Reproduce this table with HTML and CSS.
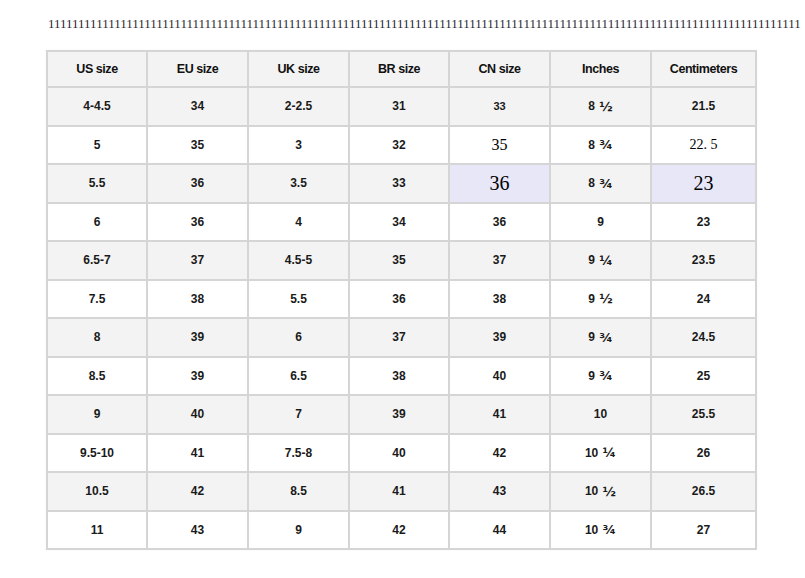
FILE: index.html
```html
<!DOCTYPE html>
<html>
<head>
<meta charset="utf-8">
<link rel="stylesheet" href="styles.css">
</head>
<body>
<div class="page">
  <p class="ones">11111111111111111111111111111111111111111111111111111111111111111111111111111111111111111111111111111111111111111111111111111</p>
  <div class="chart">
    <div class="row head">
      <div class="c">US size</div><div class="c">EU size</div><div class="c">UK size</div><div class="c">BR size</div><div class="c">CN size</div><div class="c">Inches</div><div class="c">Centimeters</div>
    </div>
    <div class="row alt">
      <div class="c">4-4.5</div><div class="c">34</div><div class="c">2-2.5</div><div class="c">31</div><div class="c small">33</div><div class="c">8&nbsp;<span class="frac">½</span></div><div class="c">21.5</div>
    </div>
    <div class="row">
      <div class="c">5</div><div class="c">35</div><div class="c">3</div><div class="c">32</div><div class="c serif m">35</div><div class="c">8&nbsp;<span class="frac">¾</span></div><div class="c serif s">22. 5</div>
    </div>
    <div class="row alt">
      <div class="c">5.5</div><div class="c">36</div><div class="c">3.5</div><div class="c">33</div><div class="c serif l hl">36</div><div class="c">8&nbsp;<span class="frac">¾</span></div><div class="c serif l hl">23</div>
    </div>
    <div class="row">
      <div class="c">6</div><div class="c">36</div><div class="c">4</div><div class="c">34</div><div class="c">36</div><div class="c">9</div><div class="c">23</div>
    </div>
    <div class="row alt">
      <div class="c">6.5-7</div><div class="c">37</div><div class="c">4.5-5</div><div class="c">35</div><div class="c">37</div><div class="c">9&nbsp;<span class="frac">¼</span></div><div class="c">23.5</div>
    </div>
    <div class="row">
      <div class="c">7.5</div><div class="c">38</div><div class="c">5.5</div><div class="c">36</div><div class="c">38</div><div class="c">9&nbsp;<span class="frac">½</span></div><div class="c">24</div>
    </div>
    <div class="row alt">
      <div class="c">8</div><div class="c">39</div><div class="c">6</div><div class="c">37</div><div class="c">39</div><div class="c">9&nbsp;<span class="frac">¾</span></div><div class="c">24.5</div>
    </div>
    <div class="row">
      <div class="c">8.5</div><div class="c">39</div><div class="c">6.5</div><div class="c">38</div><div class="c">40</div><div class="c">9&nbsp;<span class="frac">¾</span></div><div class="c">25</div>
    </div>
    <div class="row alt">
      <div class="c">9</div><div class="c">40</div><div class="c">7</div><div class="c">39</div><div class="c">41</div><div class="c">10</div><div class="c">25.5</div>
    </div>
    <div class="row">
      <div class="c">9.5-10</div><div class="c">41</div><div class="c">7.5-8</div><div class="c">40</div><div class="c">42</div><div class="c">10&nbsp;<span class="frac">¼</span></div><div class="c">26</div>
    </div>
    <div class="row alt">
      <div class="c">10.5</div><div class="c">42</div><div class="c">8.5</div><div class="c">41</div><div class="c">43</div><div class="c">10&nbsp;<span class="frac">½</span></div><div class="c">26.5</div>
    </div>
    <div class="row">
      <div class="c">11</div><div class="c">43</div><div class="c">9</div><div class="c">42</div><div class="c">44</div><div class="c">10&nbsp;<span class="frac">¾</span></div><div class="c">27</div>
    </div>
  </div>
</div>
</body>
</html>
```
FILE: styles.css
```css
html, body {
  margin: 0;
  padding: 0;
  background: #ffffff;
}
body {
  overflow: hidden;
  width: 805px;
  height: 578px;
}
.page {
  padding: 16px 0 0 0;
}
.ones {
  margin: 0 0 0 48px;
  font-family: "Liberation Serif", serif;
  font-size: 13px;
  line-height: 15px;
  color: #2a1f33;
  white-space: nowrap;
}
.chart {
  margin: 19px 0 0 46px;
  display: grid;
  grid-template-columns: 98px 99px 99px 98px 99px 99px 103px;
  grid-template-rows: 34px repeat(12, 36.5px);
  gap: 2px;
  padding: 2px;
  width: max-content;
  background: #d5d5d5;
  box-shadow: 0 0 1px rgba(0,0,0,0.08);
}
.row {
  display: contents;
}
.c {
  display: flex;
  align-items: center;
  justify-content: center;
  background: #ffffff;
  font-family: "Liberation Sans", Arial, sans-serif;
  font-weight: bold;
  font-size: 12px;
  color: #1a1a1a;
}
.row.alt .c,
.row.head .c {
  background: #f3f3f3;
}
.row.head .c {
  font-size: 12.5px;
  letter-spacing: -0.45px;
  color: #111;
}
.frac {
  font-family: "DejaVu Sans", sans-serif;
  font-weight: bold;
  font-size: 13px;
  margin-left: 1px;
}
.c.small {
  font-size: 11px;
}
.c.serif {
  font-family: "Liberation Serif", serif;
  font-weight: normal;
  color: #000;
}
.c.m { font-size: 16px; }
.c.s { font-size: 14px; }
.c.l { font-size: 20px; }
.row .c.hl {
  background: #e7e7f8;
}
```
